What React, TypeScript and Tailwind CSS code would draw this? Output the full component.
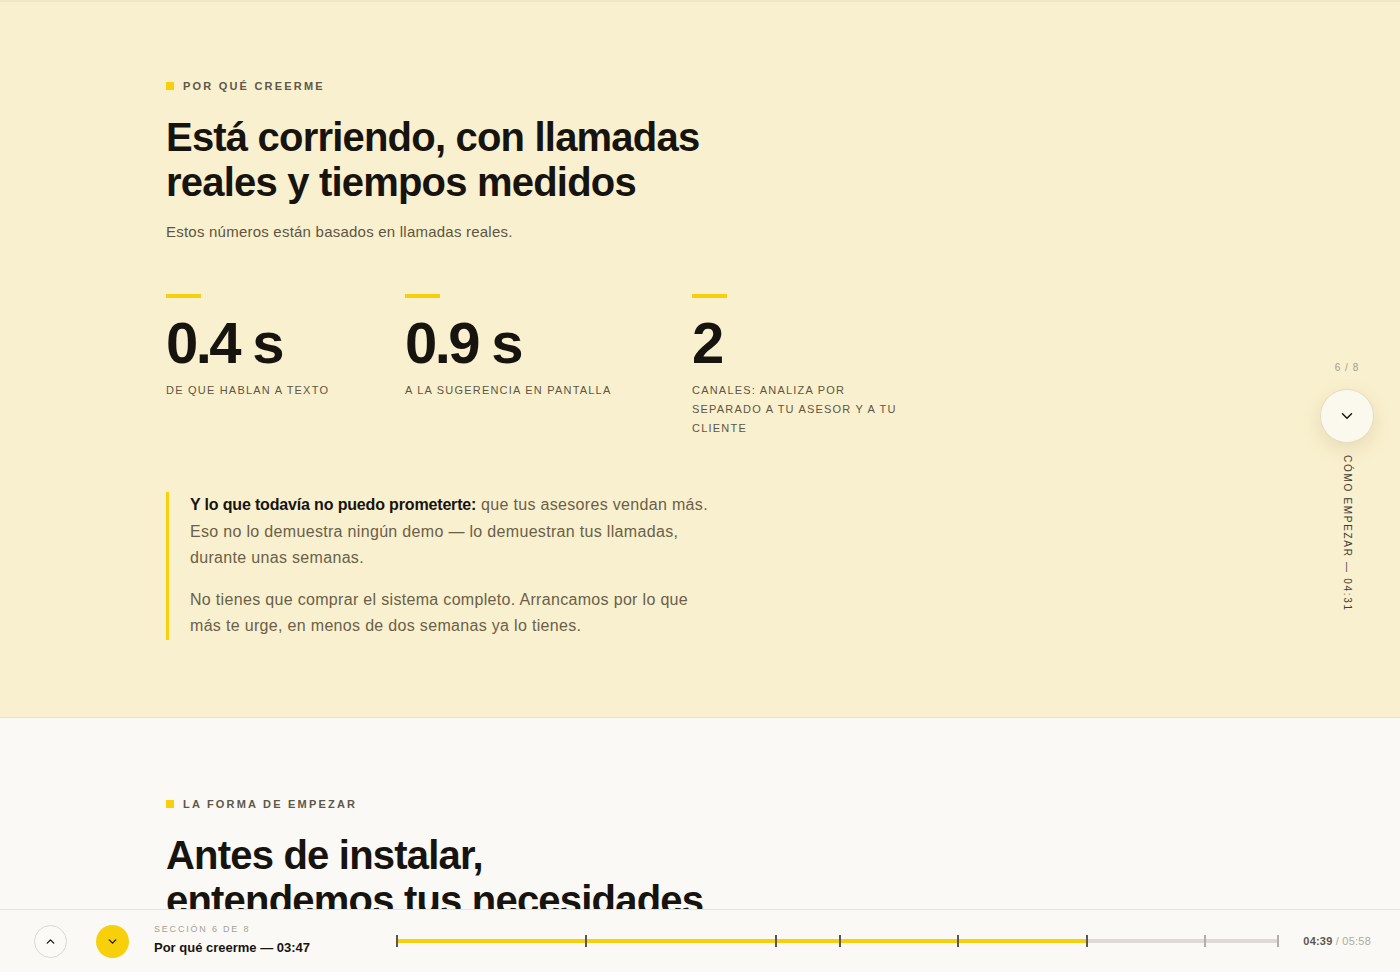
import { ChevronDown, ChevronUp } from "lucide-react";

const FONT = { fontFamily: '"Liberation Sans", Arial, sans-serif' };

const STATS = [
  { value: "0.4 s", label: "De que hablan a texto" },
  { value: "0.9 s", label: "A la sugerencia en pantalla" },
  { value: "2", label: "Canales: analiza por separado a tu asesor y a tu cliente" },
];

// posiciones de las marcas en px desde el inicio de la barra
const TICKS = [0, 189, 379, 443, 561, 690, 808, 881];
const BAR_WIDTH = 883;
const BAR_FILLED = 690;

function Eyebrow({ children }: { children: React.ReactNode }) {
  return (
    <div className="flex items-center gap-[9px]">
      <span className="h-[8px] w-[8px] bg-[#f7cf0a]" />
      <span className="text-[11px] font-semibold uppercase tracking-[0.2em] text-[#5e5848]">
        {children}
      </span>
    </div>
  );
}

function Stat({ value, label }: { value: string; label: string }) {
  return (
    <div className="flex max-w-[215px] flex-col">
      <span className="h-[4px] w-[35px] bg-[#f7cf0a]" />
      <span className="mt-[11px] text-[58px] font-bold leading-[68px] tracking-[-0.045em] text-[#17140f]">
        {value}
      </span>
      <span className="mt-[4px] text-[11px] uppercase leading-[19px] tracking-[0.11em] text-[#5e5640]">
        {label}
      </span>
    </div>
  );
}

function SideNav() {
  return (
    <div className="absolute right-[26px] top-[360px] flex w-[54px] flex-col items-center">
      <span className="text-[10px] tracking-[0.1em] text-[#a39c88]">6 / 8</span>
      <button className="mt-[14px] flex h-[54px] w-[54px] items-center justify-center rounded-full border border-[#e4ddc6] bg-[#fbf8ee] shadow-[0_6px_18px_rgba(150,130,60,0.18)]">
        <ChevronDown className="h-[18px] w-[18px] text-[#1b1812]" strokeWidth={2} />
      </button>
      <span
        className="mt-[12px] text-[10px] uppercase tracking-[0.17em] text-[#3f3b2f]"
        style={{ writingMode: "vertical-rl" }}
      >
        Cómo empezar — 04:31
      </span>
    </div>
  );
}

function Footer() {
  return (
    <div className="absolute bottom-0 left-0 right-0 flex h-[63px] items-center border-t border-[#e7e4dc] bg-[#faf9f6] pl-[34px] pr-[29px]">
      <button className="flex h-[33px] w-[33px] items-center justify-center rounded-full border border-[#dcd8cf] bg-[#fbfaf7]">
        <ChevronUp className="h-[13px] w-[13px] text-[#1b1812]" strokeWidth={2.5} />
      </button>
      <button className="ml-[29px] flex h-[33px] w-[33px] items-center justify-center rounded-full bg-[#f7cf0a]">
        <ChevronDown className="h-[13px] w-[13px] text-[#1b1812]" strokeWidth={2.5} />
      </button>
      <div className="mb-[4px] ml-[25px] flex flex-col">
        <span className="text-[9px] uppercase leading-[12px] tracking-[0.2em] text-[#a5a196]">
          Sección 6 de 8
        </span>
        <span className="mt-[5px] text-[13px] font-bold leading-[16px] text-[#17140f]">
          Por qué creerme — 03:47
        </span>
      </div>
      <div className="relative ml-[86px] h-[14px]" style={{ width: BAR_WIDTH }}>
        <div className="absolute left-0 right-0 top-[5px] h-[4px] bg-[#dddad3]" />
        <div className="absolute left-0 top-[5px] h-[4px] bg-[#f7cf0a]" style={{ width: BAR_FILLED }} />
        {TICKS.map((t, i) => (
          <span
            key={i}
            className={`absolute top-[1px] h-[12px] w-[2px] ${i >= 6 ? "bg-[#b3afa6]" : "bg-[#5a5650]"}`}
            style={{ left: t }}
          />
        ))}
      </div>
      <div className="ml-auto text-[11px] tracking-[0.02em]">
        <span className="font-bold text-[#5a564e]">04:39</span>
        <span className="text-[#aeaaa0]"> / 05:58</span>
      </div>
    </div>
  );
}

export default function App() {
  return (
    <div className="relative h-[972px] w-[1400px] overflow-hidden bg-[#faf9f6]" style={FONT}>
      <section className="h-[718px] border-b border-[#ebe4cc] border-t-[2px] border-t-[#efe6c4] bg-[#f9f0cf] pl-[166px] pt-[76px]">
        <Eyebrow>Por qué creerme</Eyebrow>
        <h1 className="mt-[20px] text-[40px] font-bold leading-[45px] tracking-[-0.02em] text-[#17140f]">
          Está corriendo, con llamadas
          <br />
          reales y tiempos medidos
        </h1>
        <p className="mt-[16px] text-[15px] tracking-[0.015em] text-[#5d5541]">
          Estos números están basados en llamadas reales.
        </p>

        <div className="mt-[51px] grid grid-cols-[239px_287px_215px]">
          {STATS.map(s => (
            <Stat key={s.value} value={s.value} label={s.label} />
          ))}
        </div>

        <div className="mt-[54px] w-[560px] border-l-[3px] border-[#f7cf0a] pl-[21px] text-[16px] leading-[26.5px] tracking-[0.02em] text-[#6a6048]">
          <p>
            <span className="font-bold tracking-[-0.01em] text-[#17140f]">Y lo que todavía no puedo prometerte:</span>{" "}
            que tus asesores vendan más.
            <br />
            Eso no lo demuestra ningún demo — lo demuestran tus llamadas,
            <br />
            durante unas semanas.
          </p>
          <p className="mt-[15px]">
            No tienes que comprar el sistema completo. Arrancamos por lo que
            <br />
            más te urge, en menos de dos semanas ya lo tienes.
          </p>
        </div>
      </section>

      <section className="pl-[166px] pt-[78px]">
        <Eyebrow>La forma de empezar</Eyebrow>
        <h2 className="mt-[20px] text-[40px] font-bold leading-[45px] tracking-[-0.02em] text-[#17140f]">
          Antes de instalar,
          <br />
          entendemos tus necesidades
        </h2>
      </section>

      <SideNav />
      <Footer />
    </div>
  );
}
